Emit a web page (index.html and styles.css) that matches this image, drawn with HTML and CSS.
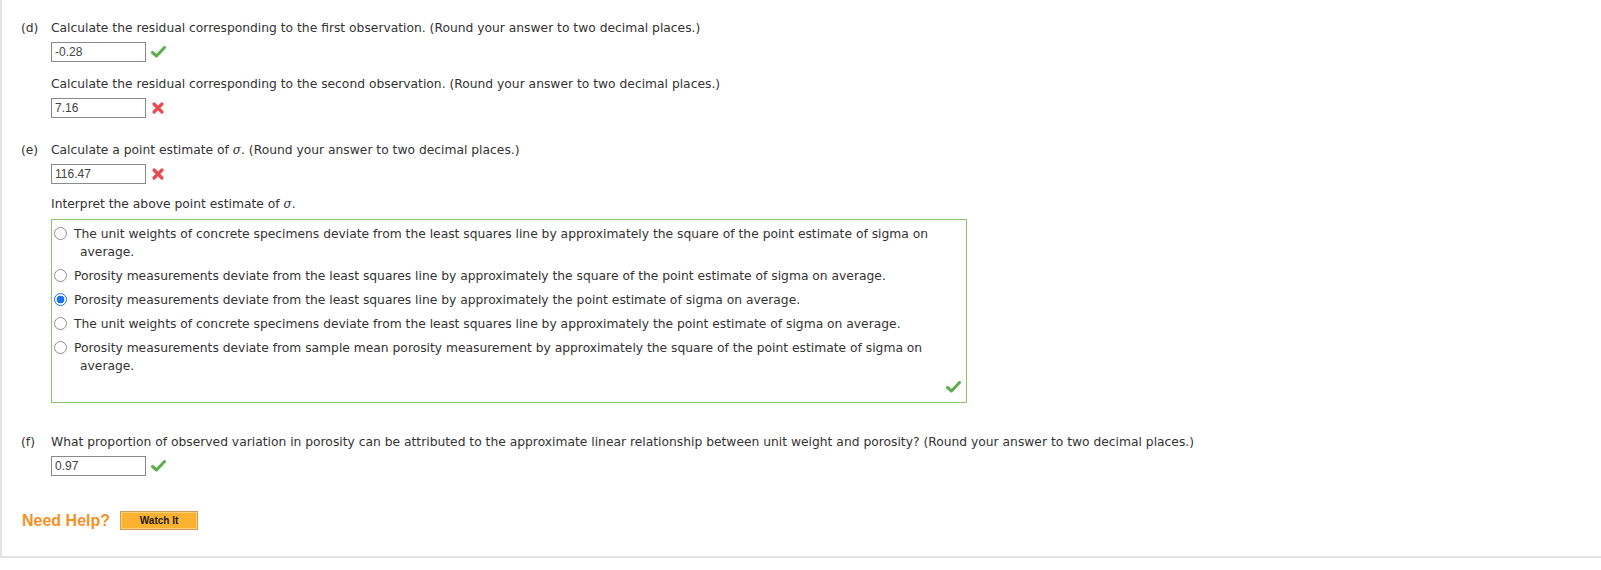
FILE: index.html
```html
<!DOCTYPE html>
<html>
<head>
<meta charset="utf-8">
<link rel="stylesheet" href="styles.css">
</head>
<body>
<div class="page">
  <div class="part part-d">
    <div class="label">(d)</div>
    <div class="body">
      <div class="q">Calculate the residual corresponding to the first observation. (Round your answer to two decimal places.)</div>
      <div class="ans"><span class="inp">-0.28</span>
        <svg class="icon" width="15" height="12" viewBox="0 0 15 12"><path d="M1.5 6.5 L5.5 10 L13.5 1.5" fill="none" stroke="#5cae4c" stroke-width="3" stroke-linecap="round" stroke-linejoin="round"/></svg>
      </div>
      <div class="q q2">Calculate the residual corresponding to the second observation. (Round your answer to two decimal places.)</div>
      <div class="ans"><span class="inp">7.16</span>
        <svg class="icon" width="14" height="14" viewBox="0 0 14 14"><path d="M3 3 L11 11 M11 3 L3 11" fill="none" stroke="#ea4a4f" stroke-width="3.2" stroke-linecap="round"/></svg>
      </div>
    </div>
  </div>

  <div class="part part-e">
    <div class="label">(e)</div>
    <div class="body">
      <div class="q">Calculate a point estimate of <i class="sig">σ</i>. (Round your answer to two decimal places.)</div>
      <div class="ans"><span class="inp">116.47</span>
        <svg class="icon" width="14" height="14" viewBox="0 0 14 14"><path d="M3 3 L11 11 M11 3 L3 11" fill="none" stroke="#ea4a4f" stroke-width="3.2" stroke-linecap="round"/></svg>
      </div>
      <div class="q q3">Interpret the above point estimate of <i class="sig">σ</i>.</div>
      <div class="choices">
        <div class="opt"><span class="radio"></span>The unit weights of concrete specimens deviate from the least squares line by approximately the square of the point estimate of sigma on<br>average.</div>
        <div class="opt"><span class="radio"></span>Porosity measurements deviate from the least squares line by approximately the square of the point estimate of sigma on average.</div>
        <div class="opt"><span class="radio on"></span>Porosity measurements deviate from the least squares line by approximately the point estimate of sigma on average.</div>
        <div class="opt"><span class="radio"></span>The unit weights of concrete specimens deviate from the least squares line by approximately the point estimate of sigma on average.</div>
        <div class="opt"><span class="radio"></span>Porosity measurements deviate from sample mean porosity measurement by approximately the square of the point estimate of sigma on<br>average.</div>
        <div class="box-mark">
          <svg width="15" height="12" viewBox="0 0 15 12"><path d="M1.5 6.5 L5.5 10 L13.5 1.5" fill="none" stroke="#5cae4c" stroke-width="3" stroke-linecap="round" stroke-linejoin="round"/></svg>
        </div>
      </div>
    </div>
  </div>

  <div class="part part-f">
    <div class="label">(f)</div>
    <div class="body">
      <div class="q">What proportion of observed variation in porosity can be attributed to the approximate linear relationship between unit weight and porosity? (Round your answer to two decimal places.)</div>
      <div class="ans"><span class="inp">0.97</span>
        <svg class="icon" width="15" height="12" viewBox="0 0 15 12"><path d="M1.5 6.5 L5.5 10 L13.5 1.5" fill="none" stroke="#5cae4c" stroke-width="3" stroke-linecap="round" stroke-linejoin="round"/></svg>
      </div>
    </div>
  </div>

  <div class="help">
    <span class="need">Need Help?</span>
    <span class="watch">Watch It</span>
  </div>
</div>
</body>
</html>
```

FILE: styles.css
```css
html, body {
  margin: 0;
  padding: 0;
  background: #ffffff;
}
.page {
  box-sizing: border-box;
  height: 558px;
  border-left: 2px solid #e3e3e3;
  border-bottom: 2px solid #e3e3e3;
  padding: 19px 0 0 19px;
  font-family: "DejaVu Sans", Verdana, sans-serif;
  font-size: 12.3px;
  line-height: 18px;
  color: #333333;
}
.part {
  display: flex;
}
.label {
  width: 30px;
  flex: none;
}
.body {
  flex: 1;
}
.ans {
  display: flex;
  align-items: center;
  margin-top: 5px;
  height: 20px;
}
.inp {
  box-sizing: border-box;
  width: 95px;
  height: 20px;
  border: 1px solid #8a8a8a;
  padding: 1px 3px 0;
  font-family: "Liberation Sans", Arial, sans-serif;
  font-size: 12px;
  line-height: 17px;
  color: #444;
}
.icon {
  margin-left: 5px;
}
.q2 {
  margin-top: 13px;
}
.part-e {
  margin-top: 23px;
}
.q3 {
  margin-top: 11px;
}
.sig {
  font-family: "DejaVu Serif", serif;
  font-size: 12px;
}
.choices {
  box-sizing: border-box;
  width: 916px;
  height: 184px;
  margin-top: 6px;
  border: 1px solid #8cc472;
  padding: 5px 0 0 0;
}
.opt {
  padding-left: 28px;
  text-indent: -26px;
  margin-bottom: 6px;
}
.radio {
  display: inline-block;
  box-sizing: border-box;
  width: 13px;
  height: 13px;
  border: 1px solid #8f8f8f;
  border-radius: 50%;
  margin-right: 7px;
  vertical-align: -2px;
  text-indent: 0;
  background: #fff;
}
.radio.on {
  border: 1px solid #1a73e8;
  background: radial-gradient(circle, #1a73e8 0 3.6px, #fff 4.2px);
}
.box-mark {
  display: flex;
  justify-content: flex-end;
  padding-right: 5px;
  margin-top: 4px;
}
.part-f {
  margin-top: 30px;
}
.help {
  display: flex;
  align-items: center;
  margin-top: 35px;
  margin-left: 1px;
}
.need {
  font-family: "Liberation Sans", Arial, sans-serif;
  font-weight: bold;
  font-size: 16px;
  color: #f5901f;
  margin-right: 10px;
}
.watch {
  box-sizing: border-box;
  width: 78px;
  height: 19px;
  border: 1px solid #d49a5a;
  box-shadow: inset 0 0 0 1px #ffcf72;
  background: #fbb231;
  font-family: "Liberation Sans", Arial, sans-serif;
  font-weight: bold;
  font-size: 10px;
  line-height: 17px;
  text-align: center;
  color: #1a1a1a;
}
```
